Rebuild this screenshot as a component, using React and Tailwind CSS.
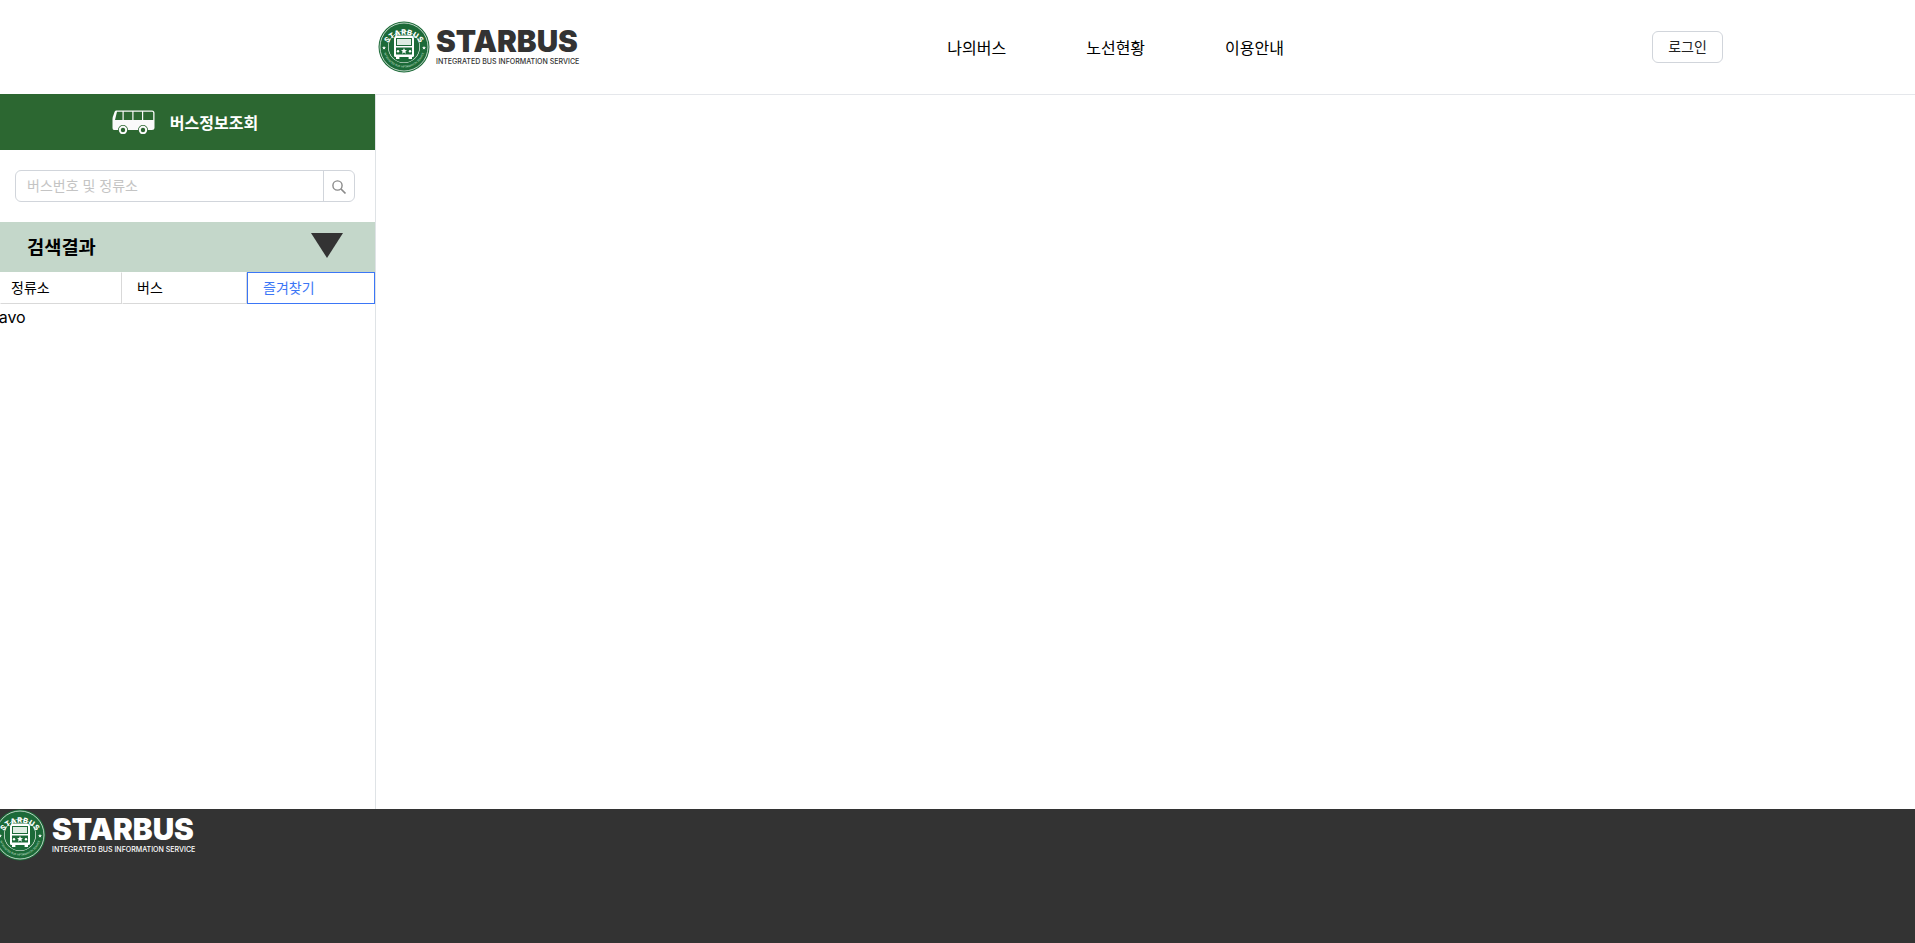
import React, { useState } from 'react';

const font = "font-['Inter','Noto_Sans_CJK_KR',sans-serif]";

// round badge of the brand
const LogoMark = ({ id }) => (
  <svg width="52" height="52" viewBox="0 0 52 52" className="shrink-0">
    <circle cx="26" cy="26" r="25.5" fill="#1c6a38" />
    <circle cx="26" cy="26" r="24" fill="none" stroke="#ffffff" strokeWidth="0.7" />
    <circle cx="26" cy="26" r="16" fill="#ffffff" />
    <circle cx="26" cy="26" r="15.4" fill="#1c6a38" />
    <defs>
      <path id={`${id}-top`} d="M 6.5 30 A 19.8 19.8 0 0 1 45.5 30" />
      <path id={`${id}-bottom`} d="M 6 32 A 21 21 0 0 0 46 32" />
    </defs>
    <text fill="#ffffff" fontSize="7.4" fontWeight="800" fontFamily="Inter, sans-serif" letterSpacing="0.5">
      <textPath href={`#${id}-top`} startOffset="50%" textAnchor="middle">STARBUS</textPath>
    </text>
    <text fill="#cfe3d6" fontSize="2.6" fontFamily="Inter, sans-serif">
      <textPath href={`#${id}-bottom`} startOffset="50%" textAnchor="middle">INTEGRATED BUS INFORMATION SERVICE</textPath>
    </text>
    <path d="M16 18 Q16 14.5 19.5 14.5 H32.5 Q36 14.5 36 18 V34.5 Q36 36 34.5 36 H17.5 Q16 36 16 34.5 Z" fill="#ffffff" />
    <rect x="18" y="17" width="16" height="8" fill="#1c6a38" />
    <rect x="19" y="18" width="14" height="6" fill="#dfece3" />
    <rect x="18" y="26.5" width="16" height="7" fill="#1c6a38" />
    <path d="M26 27l.9 2 2.1.2-1.6 1.4.5 2.1-1.9-1.1-1.9 1.1.5-2.1-1.6-1.4 2.1-.2z" fill="#ffffff" />
    <circle cx="20" cy="30.2" r="1.2" fill="#ffffff" />
    <circle cx="32" cy="30.2" r="1.2" fill="#ffffff" />
    <rect x="18" y="36" width="3.4" height="2" fill="#ffffff" />
    <rect x="30.6" y="36" width="3.4" height="2" fill="#ffffff" />
    <path d="M6 25l.6 1.2 1.3.1-1 .9.3 1.3-1.2-.7-1.2.7.3-1.3-1-.9 1.3-.1z" fill="#ffffff" />
    <path d="M46 25l.6 1.2 1.3.1-1 .9.3 1.3-1.2-.7-1.2.7.3-1.3-1-.9 1.3-.1z" fill="#ffffff" />
  </svg>
);

const Logo = ({ id, textColor }) => (
  <div className="flex items-center gap-[6px]">
    <LogoMark id={id} />
    <div className={`flex flex-col -mt-[2px] font-['Inter',sans-serif] ${textColor}`}>
      <span className="text-[29.7px] leading-[30px] font-black">STARBUS</span>
      <span className="text-[7.05px] leading-[10px] mt-[1px] font-medium whitespace-nowrap">INTEGRATED BUS INFORMATION SERVICE</span>
    </div>
  </div>
);

const BusIcon = () => (
  <svg width="43" height="24" viewBox="0 0 43 24">
    <path
      fillRule="evenodd"
      fill="#fafafa"
      d="M4 0.5 H40 Q42.5 0.5 42.5 3 V18 Q42.5 20 40 20 H36 A5 5 0 0 0 26 20 H16 A5 5 0 0 0 6 20 H2 Q0.5 20 0.5 18 V9 Q0.5 7 1.5 5 L2.5 2 Q3 0.5 4 0.5 Z M5 1.8 L3 10 H10.5 V1.8 Z M11.7 1.8 V10 H20.3 V1.8 Z M21.5 1.8 V10 H30 V1.8 Z M31.2 1.8 V10 H41.2 V3 Q41.2 1.8 40 1.8 Z"
    />
    <circle cx="11" cy="20" r="3.2" fill="none" stroke="#fafafa" strokeWidth="2" />
    <circle cx="31" cy="20" r="3.2" fill="none" stroke="#fafafa" strokeWidth="2" />
  </svg>
);

const SearchIcon = () => (
  <svg width="16" height="16" viewBox="0 0 16 16" fill="none" stroke="#8a8a8a" strokeWidth="1.4">
    <circle cx="6.5" cy="6.5" r="4.6" />
    <path d="M10 10 L14.5 14.5" strokeWidth="1.7" />
  </svg>
);

const tabs = ['정류소', '버스', '즐겨찾기'];

const App = () => {
  const [activeTab, setActiveTab] = useState('즐겨찾기');

  return (
    <div className={`flex flex-col h-[943px] overflow-hidden bg-white text-black ${font}`}>
      {/* header */}
      <header className="h-[95px] shrink-0 flex items-center justify-between pl-[378px] pr-[192px] border-b border-[#e5e7eb]">
        <Logo id="top-logo" textColor="text-[#333333]" />
        <nav className="flex gap-[80px] text-base font-['Noto_Sans_CJK_KR',sans-serif]">
          <a>나의버스</a>
          <a>노선현황</a>
          <a>이용안내</a>
        </nav>
        <button className="w-[71px] h-[32px] mb-[1px] pt-[1px] rounded-md border border-[#d1d5db] text-sm text-[#222222]">로그인</button>
      </header>

      <main className="flex flex-1 min-h-0">
        {/* sidebar */}
        <aside className="w-[376px] shrink-0 border-r border-[#dfe3e6] -mt-px">
          <div className="h-[56px] bg-[#2c6731] flex items-center justify-center gap-[15px] text-white pr-[5px]">
            <BusIcon />
            <h2 className="text-base font-bold pt-[1px]">버스정보조회</h2>
          </div>

          <div className="px-[15px] pt-[20px] pb-[20px]">
            <div className="flex h-[32px] w-[340px] rounded-md border border-[#d1d5db]">
              <input
                placeholder="버스번호 및 정류소"
                className="flex-1 min-w-0 px-[11px] text-sm outline-none placeholder:text-[#c4c4c4]"
              />
              <div className="w-[31px] flex items-center justify-center border-l border-[#d1d5db] pt-[1px]">
                <SearchIcon />
              </div>
            </div>
          </div>

          <div className="h-[50px] bg-[#c4d7ca] flex items-center justify-between pl-[27px] pr-[32px]">
            <h3 className="text-[18.7px] font-bold pt-[2px]">검색결과</h3>
            <div className="w-0 h-0 border-x-[16px] border-x-transparent border-t-[25px] border-t-[#333333] mb-[4px]" />
          </div>

          <div className="flex h-[32px] text-sm">
            {tabs.map((tab) => (
              <button
                key={tab}
                onClick={() => setActiveTab(tab)}
                className={`text-left border ${
                  tab === '정류소' ? 'w-[122px] pl-[10px]' : tab === '버스' ? 'w-[125px] pl-[14px]' : 'w-[128px] pl-[15px]'
                } ${
                  activeTab === tab
                    ? 'border-[#3b76f6] text-[#3b76f6]'
                    : 'border-transparent border-b-[#d9d9d9] border-r-[#d9d9d9]'
                }`}
              >
                {tab}
              </button>
            ))}
          </div>

          <div className="-ml-[7px] pt-[1px] text-base">favo</div>
        </aside>
        <section className="flex-1" />
      </main>

      {/* footer */}
      <footer className="h-[134px] shrink-0 bg-[#333333]">
        <div className="-ml-[6px]">
          <Logo id="footer-logo" textColor="text-white" />
        </div>
      </footer>
    </div>
  );
};

export default App;
